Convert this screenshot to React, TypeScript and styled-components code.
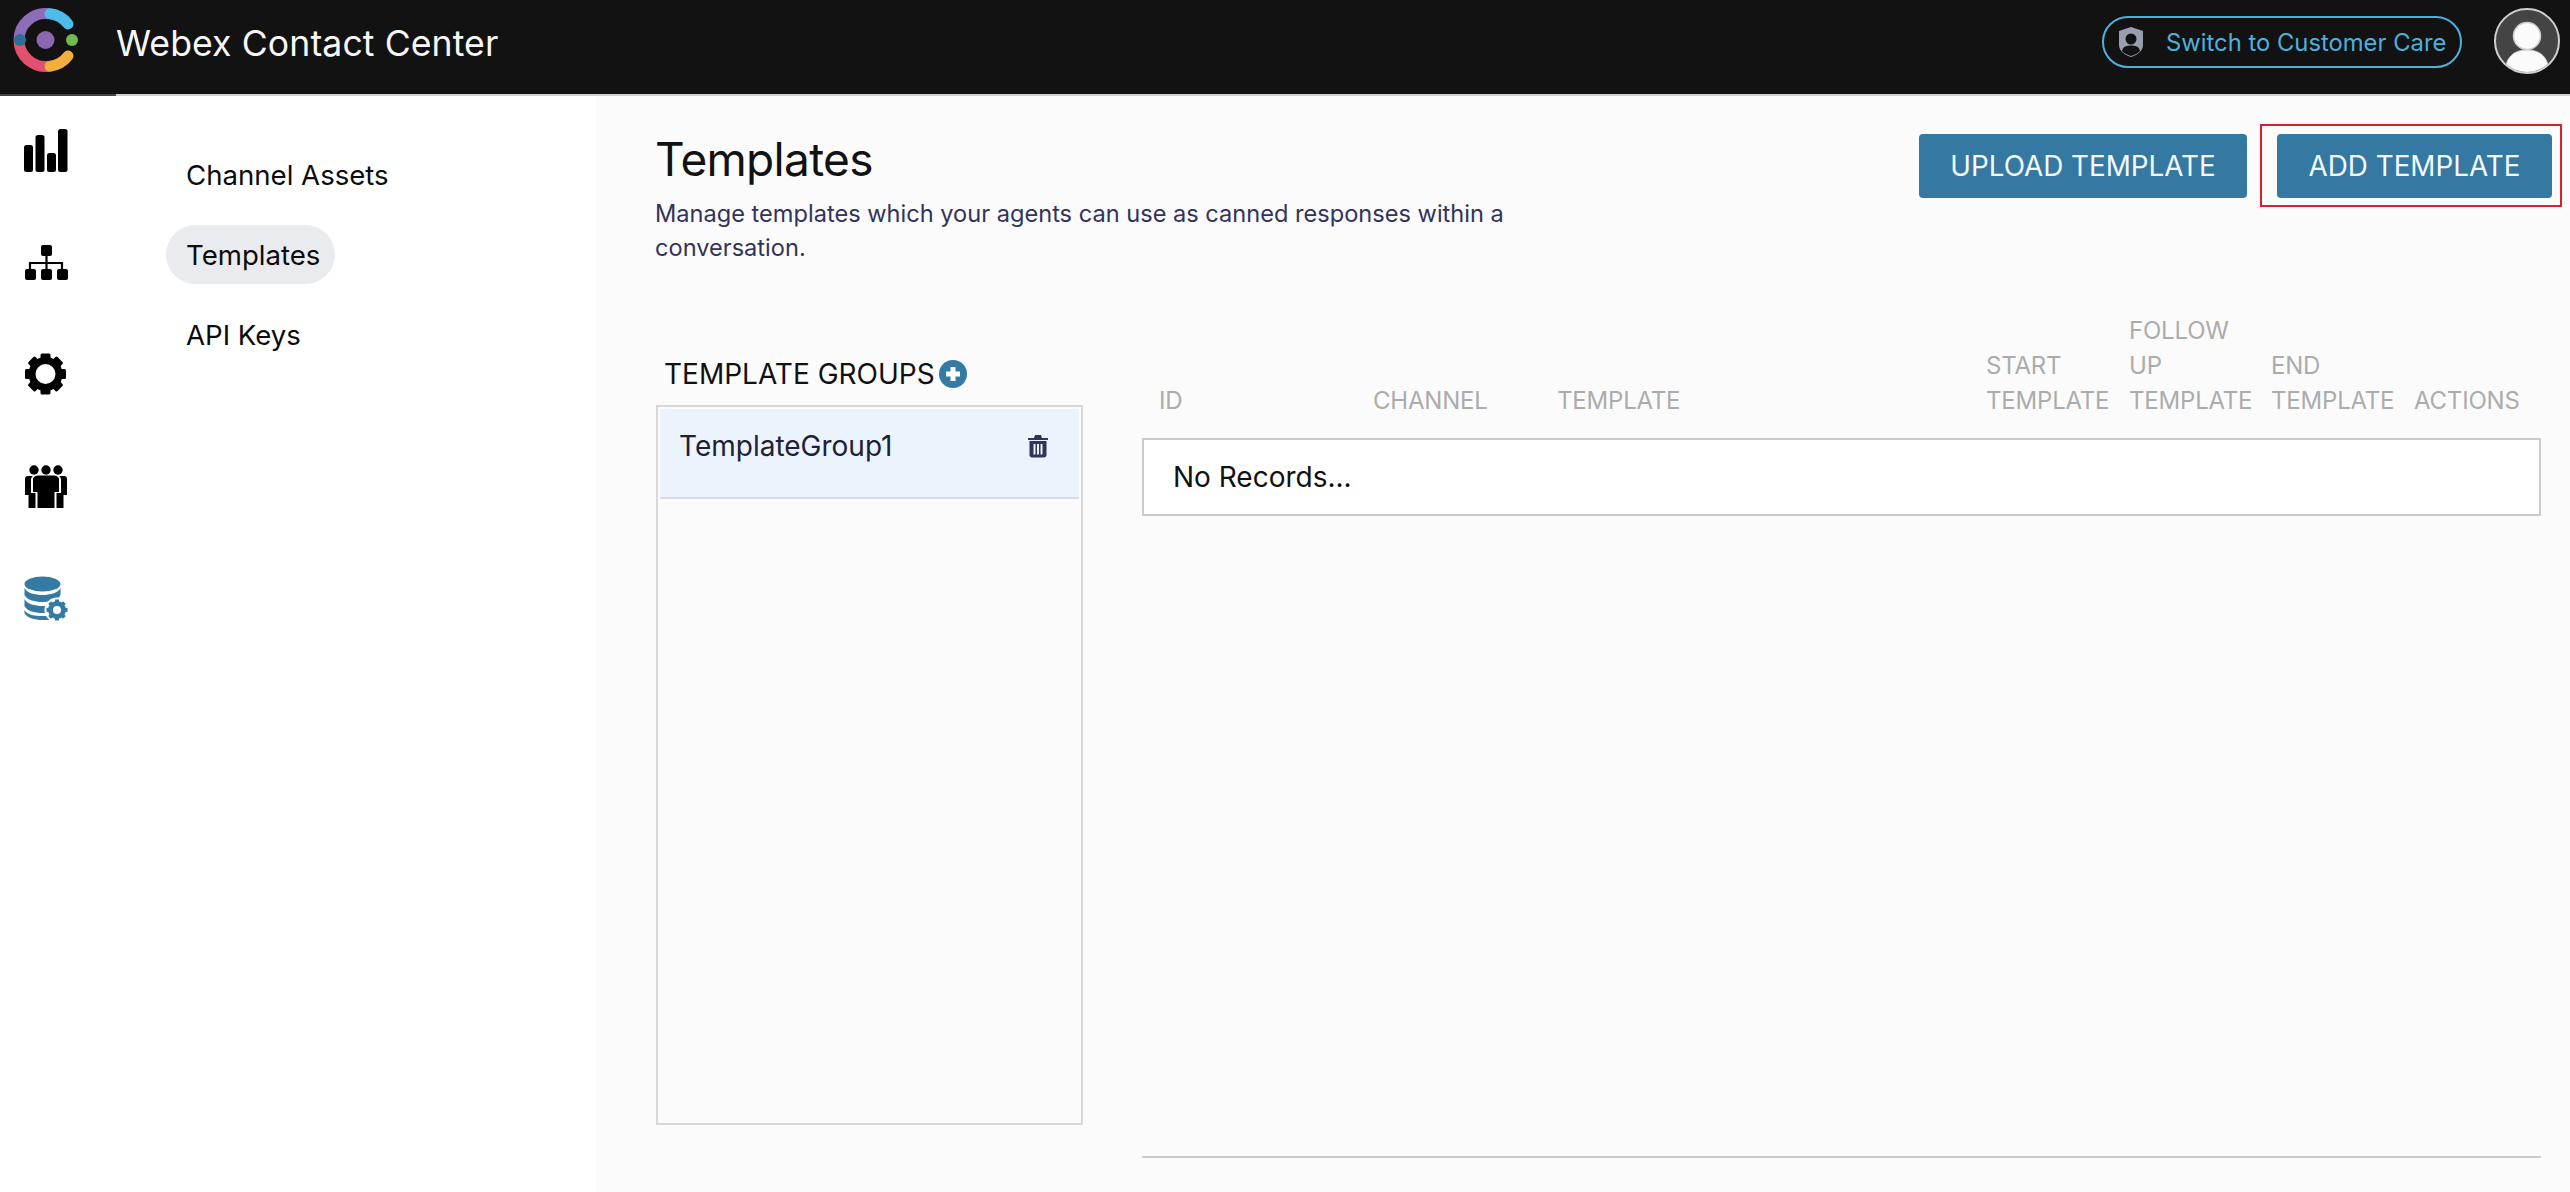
import styled, { createGlobalStyle } from "styled-components";

const GlobalStyle = createGlobalStyle`
  html, body {
    margin: 0;
    padding: 0;
    background: #fff;
    font-family: Inter, "Liberation Sans", sans-serif;
  }
  * {
    box-sizing: border-box;
  }
`;

const Page = styled.div`
  width: 2570px;
  height: 1192px;
  display: flex;
  flex-direction: column;
  overflow: hidden;
`;

const Header = styled.header`
  height: 96px;
  flex: none;
  display: flex;
  align-items: flex-start;
  background: #121212;
  border-bottom: 2px solid #d2d2d2;
  position: relative;

  &::after {
    content: "";
    position: absolute;
    left: 0;
    bottom: -2px;
    width: 116px;
    height: 2px;
    background: #444;
  }
`;

const LogoWrap = styled.div`
  width: 116px;
  height: 94px;
  flex: none;
`;

const LogoSvg = styled.svg`
  display: block;
`;

const AppTitle = styled.div`
  font-size: 35.6px;
  line-height: 40px;
  margin-top: 24px;
  color: #f7f7f7;
  letter-spacing: 0.1px;
`;

const SwitchPill = styled.div`
  margin-left: auto;
  margin-top: 16px;
  width: 360px;
  height: 52px;
  display: flex;
  align-items: center;
  padding-left: 13px;
  border: 2px solid #4fb0dc;
  border-radius: 26px;
  color: #4fb0dc;
  font-size: 23.8px;
  white-space: nowrap;
  gap: 21px;
`;

const AvatarWrap = styled.div`
  width: 66px;
  height: 66px;
  margin: 8px 10px 0 32px;
  flex: none;
`;

const Body = styled.div`
  flex: 1;
  display: flex;
  min-height: 0;
`;

const Rail = styled.nav`
  width: 118px;
  flex: none;
  padding-left: 22px;
  margin-top: -2px;
`;

const RailItem = styled.div`
  height: 112px;
  display: flex;
  align-items: center;
`;

const SubNav = styled.nav`
  width: 478px;
  flex: none;
  display: flex;
  flex-direction: column;
  align-items: flex-start;
  padding: 49px 0 0 48px;
  gap: 21px;
`;

const SubNavItem = styled.div<{ $active?: boolean }>`
  height: 59px;
  display: flex;
  align-items: center;
  padding: 0 15px 0 20px;
  border-radius: 30px;
  font-size: 27.6px;
  color: #0c0c0c;
  background: ${(p) => (p.$active ? "#e9ebee" : "transparent")};
`;

const Main = styled.main`
  flex: 1;
  background: #fbfbfb;
  padding: 28px 8px 0 60px;
`;

const TopRow = styled.div`
  display: flex;
  align-items: flex-start;
  height: 190px;
`;

const TitleBlock = styled.div`
  padding-top: 9px;
  width: 870px;
`;

const PageTitle = styled.h1`
  margin: 0 0 0 -1px;
  font-size: 46px;
  line-height: 52px;
  font-weight: 400;
  letter-spacing: -0.7px;
  color: #121212;
`;

const Description = styled.p`
  margin: 12px 0 0 -1px;
  font-size: 23.6px;
  line-height: 34px;
  color: #33335a;
`;

const Actions = styled.div`
  margin-left: auto;
  display: flex;
  align-items: flex-start;
  gap: 13px;
`;

const PrimaryButton = styled.button<{ $width: number }>`
  height: 64px;
  padding: 0;
  border: none;
  border-radius: 4px;
  background: #3579a2;
  color: #f4f8fb;
  font-family: inherit;
  font-size: 27.8px;
  width: ${(p) => p.$width}px;
  display: block;
`;

const UploadSlot = styled.div`
  padding-top: 10px;
`;

const Highlight = styled.div`
  padding: 8px 8px 7px 15px;
  border: 2px solid #d9202e;
`;

const Columns = styled.div`
  display: flex;
  gap: 59px;
`;

const GroupsColumn = styled.section`
  width: 427px;
  flex: none;
`;

const GroupsLabel = styled.div`
  display: flex;
  align-items: center;
  gap: 4px;
  height: 28px;
  margin: 46px 0 17px 8px;
  font-size: 28px;
  color: #111;
`;

const GroupsBox = styled.div`
  height: 720px;
  padding: 2px;
  border: 2px solid #d8d8d8;
`;

const GroupRow = styled.div`
  height: 90px;
  display: flex;
  align-items: flex-start;
  justify-content: space-between;
  padding: 19px 30px 0 19px;
  background: #ebf4fd;
  border-bottom: 2px solid #d9dde3;
  font-size: 28px;
  line-height: 36px;
  color: #1f2038;
`;

const TrashSvg = styled.svg`
  margin-top: 6px;
`;

const TableColumn = styled.section`
  width: 1399px;
  flex: none;
`;

const TableHead = styled.div`
  display: grid;
  grid-template-columns: 214px 184px 429px 143px 142px 143px 144px;
  align-items: end;
  margin-top: -1px;
  padding-bottom: 20px;
`;

const HeadCell = styled.div`
  padding-left: 17px;
  font-size: 24px;
  line-height: 35px;
  color: #acacac;
  letter-spacing: -0.2px;
`;

const EmptyRow = styled.div`
  height: 78px;
  display: flex;
  align-items: center;
  padding-left: 29px;
  background: #fff;
  border: 2px solid #cbcbcb;
  font-size: 28px;
  color: #111;
`;

const TableRule = styled.div`
  height: 2px;
  margin-top: 640px;
  background: #cbcbcb;
`;

const Logo = () => (
  <LogoSvg width="90" height="80" viewBox="0 0 90 80" fill="none">
    <g strokeWidth="11">
      <path d="M19 40 A26.5 26.5 0 0 1 49 13.8" stroke="#8f6cb8" />
      <path d="M50 13.8 A26.5 26.5 0 0 1 68 24" stroke="#4fbbe8" strokeLinecap="round" />
      <path d="M19 40 A26.5 26.5 0 0 0 49 66.2" stroke="#e3506f" />
      <path d="M50 66.2 A26.5 26.5 0 0 0 68 56" stroke="#f3ae3c" strokeLinecap="round" />
    </g>
    <circle cx="20" cy="40" r="6" fill="#2b6e96" />
    <circle cx="45.5" cy="40" r="9" fill="#8a68b2" />
    <circle cx="72" cy="40" r="6" fill="#73b84f" />
  </LogoSvg>
);

const ShieldIcon = () => (
  <svg width="28" height="32" viewBox="0 0 28 32">
    <path d="M14 1 L26 5 V19 C26 25 20 29 14 31 C8 29 2 25 2 19 V5 Z" fill="#9a9db0" />
    <circle cx="14" cy="13" r="5.5" fill="#121212" />
    <path d="M5 25 C6 20 10 19.5 14 19.5 C18 19.5 22 20 23 25 C20 28 17 29 14 30 C11 29 8 28 5 25 Z" fill="#121212" />
  </svg>
);

const Avatar = () => (
  <LogoSvg width="66" height="66" viewBox="0 0 66 66">
    <defs>
      <clipPath id="avatar-clip">
        <circle cx="33" cy="33" r="31" />
      </clipPath>
    </defs>
    <circle cx="33" cy="33" r="32" fill="#444" stroke="#cfcfcf" strokeWidth="2" />
    <g clipPath="url(#avatar-clip)">
      <path d="M11 66 C11 50 19 42 33 42 C47 42 55 50 55 66 Z" fill="#fbfbfb" stroke="#cfcfcf" />
      <circle cx="33" cy="28" r="13.5" fill="#fbfbfb" stroke="#cfcfcf" strokeWidth="1.5" />
    </g>
  </LogoSvg>
);

const BarsIcon = () => (
  <svg width="48" height="48" viewBox="0 0 48 48">
    <rect x="2" y="19" width="9" height="27" rx="2.5" />
    <rect x="13.5" y="9" width="9" height="37" rx="2.5" />
    <rect x="25" y="27" width="9" height="19" rx="2.5" />
    <rect x="36" y="3" width="9.5" height="43" rx="2.5" />
  </svg>
);

const OrgIcon = () => (
  <svg width="48" height="48" viewBox="0 0 48 48">
    <rect x="19" y="7" width="11" height="11" rx="2" />
    <rect x="3" y="31" width="11" height="11" rx="2" />
    <rect x="19" y="31" width="11" height="11" rx="2" />
    <rect x="35" y="31" width="11" height="11" rx="2" />
    <path d="M8 32 V25 H40 V32 M24.5 18 V32" fill="none" stroke="#000" strokeWidth="2.2" />
  </svg>
);

const GearIcon = () => (
  <svg width="48" height="48" viewBox="0 0 48 48">
    <circle cx="23.5" cy="24" r="13.5" fill="none" stroke="#000" strokeWidth="7" />
    {[0, 45, 90, 135, 180, 225, 270, 315].map((angle) => (
      <rect key={angle} x="18.5" y="3.5" width="10" height="8" rx="1.5" transform={`rotate(${angle} 23.5 24)`} />
    ))}
  </svg>
);

const PeopleIcon = () => (
  <svg width="48" height="48" viewBox="0 0 48 48">
    <circle cx="12" cy="8" r="4.7" />
    <circle cx="24" cy="8" r="4.7" />
    <circle cx="36" cy="8" r="4.7" />
    <path d="M6 14 H11 C9.5 15 9 16 9 18 V31 H13.5 V46 H6.5 V33 H3 V17 C3 15 4 14 6 14 Z" />
    <path d="M42 14 H37 C38.5 15 39 16 39 18 V31 H34.5 V46 H41.5 V33 H45 V17 C45 15 44 14 42 14 Z" />
    <path d="M16.5 13.5 H31.5 C34 13.5 37 15 37 17 V30 H32.5 V46 H15.5 V30 H11 V17 C11 15 14 13.5 16.5 13.5 Z" />
  </svg>
);

const DatabaseGearIcon = () => (
  <svg width="48" height="48" viewBox="0 0 48 48" fill="#347aa3">
    <ellipse cx="20.5" cy="10" rx="18" ry="7.5" />
    <path d="M2.5 14 C5 19 13 21 20.5 21 C28 21 36 19 38.5 14 V21 C36 26 28 28 20.5 28 C13 28 5 26 2.5 21 Z" />
    <path d="M2.5 25 C5 30 13 32 20.5 32 C28 32 36 30 38.5 25 V32 C36 37 28 39 20.5 39 C13 39 5 37 2.5 32 Z" />
    <path d="M2.5 36 C5 41 13 42 20.5 42 C28 42 30 42 32 41 V45 C28 46 24 46 20.5 46 C13 46 5 44 2.5 39 Z" />
    <circle cx="35" cy="36" r="12.5" fill="#fff" />
    <circle cx="35" cy="36" r="6.5" fill="none" stroke="#347aa3" strokeWidth="5" />
    {[0, 45, 90, 135, 180, 225, 270, 315].map((angle) => (
      <rect key={angle} x="33" y="25.5" width="4" height="4" transform={`rotate(${angle} 35 36)`} />
    ))}
  </svg>
);

const PlusIcon = () => (
  <svg width="28" height="28" viewBox="0 0 28 28">
    <circle cx="14" cy="14" r="14" fill="#347aa3" />
    <path d="M14 7 V21 M7 14 H21" stroke="#fff" strokeWidth="5" />
  </svg>
);

const TrashIcon = () => (
  <TrashSvg width="22" height="24" viewBox="0 0 22 24" fill="#33335a">
    <path d="M1 4 H7 L8 1 H14 L15 4 H21 V6 H1 Z" />
    <path d="M2.5 7 H19.5 V21 C19.5 22.5 18.5 23.5 17 23.5 H5 C3.5 23.5 2.5 22.5 2.5 21 Z M6.5 10 V20.5 H8.5 V10 Z M10 10 V20.5 H12 V10 Z M13.5 10 V20.5 H15.5 V10 Z" fillRule="evenodd" />
  </TrashSvg>
);

const railIcons = [BarsIcon, OrgIcon, GearIcon, PeopleIcon, DatabaseGearIcon];

const columns = [
  ["ID"],
  ["CHANNEL"],
  ["TEMPLATE"],
  ["START", "TEMPLATE"],
  ["FOLLOW", "UP", "TEMPLATE"],
  ["END", "TEMPLATE"],
  ["ACTIONS"],
];

export default function App() {
  return (
    <Page>
      <GlobalStyle />
      <Header>
        <LogoWrap>
          <Logo />
        </LogoWrap>
        <AppTitle>Webex Contact Center</AppTitle>
        <SwitchPill>
          <ShieldIcon />
          <span>Switch to Customer Care</span>
        </SwitchPill>
        <AvatarWrap>
          <Avatar />
        </AvatarWrap>
      </Header>
      <Body>
        <Rail>
          {railIcons.map((Icon, idx) => (
            <RailItem key={idx}>
              <Icon />
            </RailItem>
          ))}
        </Rail>
        <SubNav>
          <SubNavItem>Channel Assets</SubNavItem>
          <SubNavItem $active>Templates</SubNavItem>
          <SubNavItem>API Keys</SubNavItem>
        </SubNav>
        <Main>
          <TopRow>
            <TitleBlock>
              <PageTitle>Templates</PageTitle>
              <Description>
                Manage templates which your agents can use as canned responses within a conversation.
              </Description>
            </TitleBlock>
            <Actions>
              <UploadSlot>
                <PrimaryButton $width={328}>UPLOAD TEMPLATE</PrimaryButton>
              </UploadSlot>
              <Highlight>
                <PrimaryButton $width={275}>ADD TEMPLATE</PrimaryButton>
              </Highlight>
            </Actions>
          </TopRow>
          <Columns>
            <GroupsColumn>
              <GroupsLabel>
                TEMPLATE GROUPS
                <PlusIcon />
              </GroupsLabel>
              <GroupsBox>
                <GroupRow>
                  TemplateGroup1
                  <TrashIcon />
                </GroupRow>
              </GroupsBox>
            </GroupsColumn>
            <TableColumn>
              <TableHead>
                {columns.map((lines) => (
                  <HeadCell key={lines.join(" ")}>
                    {lines.map((line) => (
                      <div key={line}>{line}</div>
                    ))}
                  </HeadCell>
                ))}
              </TableHead>
              <EmptyRow>No Records...</EmptyRow>
              <TableRule />
            </TableColumn>
          </Columns>
        </Main>
      </Body>
    </Page>
  );
}
